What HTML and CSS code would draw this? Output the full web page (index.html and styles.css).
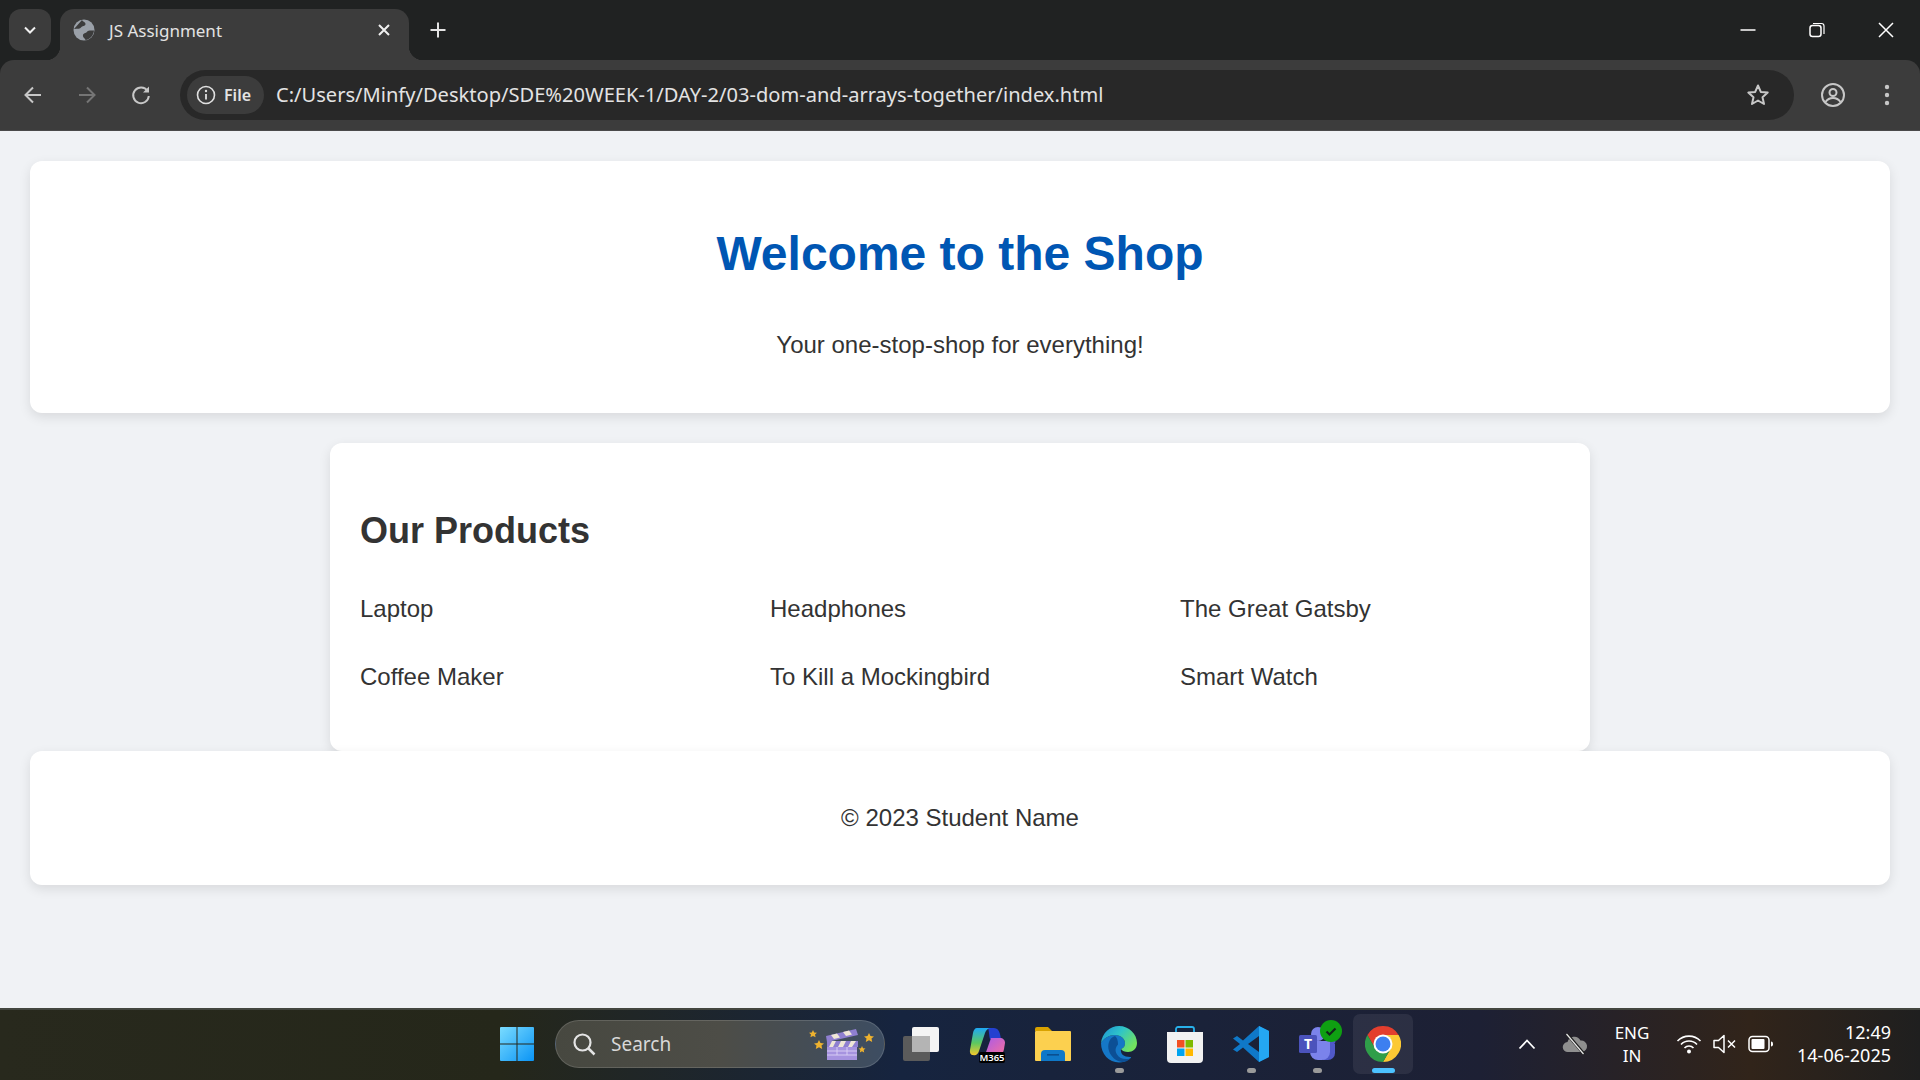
FILE: index.html
```html
<!DOCTYPE html>
<html lang="en">
<head>
	<meta charset="UTF-8" />
	<meta name="viewport" content="width=device-width, initial-scale=1.0" />
	<title>JS Assignment</title>
	<link rel="stylesheet" href="styles.css">
</head>
<body>
<div class="browser">
	<div class="titlebar">
		<button class="tab-search"><svg width="14" height="14" viewBox="0 0 14 14"><path d="M2 4.500l5 5 5-5" fill="none" stroke="#f0f0f0" stroke-width="2"/></svg></button>
		<div class="tab">
			<svg class="favicon" width="22" height="22" viewBox="0 0 22 22"><circle cx="11" cy="11" r="10.500" fill="#9aa0a8"/><path d="M9 1c.5 1.500 3.500 2 3.500 4 0 2.500-3.500 1.500-4.500 3.500-.8 1.500-3 1-7 1.500zM12.500 21c-.5-2-3-2.500-2.500-5 .4-2 2.800-1.500 3.800-3 1-1.800 3.500-1.500 7.200-1.500-.5 5-4 9-8.500 9.500z" fill="#3c3c3c"/></svg>
			<span class="tab-title">JS Assignment</span>
			<svg class="tab-close" width="14" height="14" viewBox="0 0 14 14"><path d="M2 2l10 10M12 2L2 12" stroke="#f0f0f0" stroke-width="2"/></svg>
		</div>
		<button class="new-tab"><svg width="18" height="18" viewBox="0 0 18 18"><path d="M9 1.500v15M1.500 9h15" stroke="#e4e4e4" stroke-width="2"/></svg></button>
		<div class="window-controls">
			<span class="win-btn"><svg width="18" height="18" viewBox="0 0 18 18"><path d="M1.500 9h15" stroke="#fff" stroke-width="1.500"/></svg></span>
			<span class="win-btn"><svg width="18" height="18" viewBox="0 0 18 18"><rect x="2" y="4.500" width="11" height="11" rx="2.500" fill="none" stroke="#fff" stroke-width="1.500"/><path d="M5 2.500h8.500a2.500 2.500 0 0 1 2.500 2.500v8" fill="none" stroke="#fff" stroke-width="1.200"/></svg></span>
			<span class="win-btn"><svg width="18" height="18" viewBox="0 0 18 18"><path d="M2 2l14 14M16 2L2 16" stroke="#fff" stroke-width="1.500"/></svg></span>
		</div>
	</div>

	<div class="toolbar">
		<span class="nav-btn"><svg width="22" height="22" viewBox="0 0 22 22"><path d="M19 11H4M11 3.500L3.500 11l7.500 7.500" fill="none" stroke="#c7c7c7" stroke-width="2"/></svg></span>
		<span class="nav-btn"><svg width="22" height="22" viewBox="0 0 22 22"><path d="M3 11h15M11 3.500l7.500 7.500-7.500 7.500" fill="none" stroke="#757575" stroke-width="2"/></svg></span>
		<span class="nav-btn"><svg width="22" height="22" viewBox="0 0 22 22"><path d="M17.500 7A7.800 7.800 0 1 0 18.800 12" fill="none" stroke="#c7c7c7" stroke-width="2"/><path d="M19 2.500V8.500H13z" fill="#c7c7c7"/></svg></span>
		<div class="omnibox">
			<span class="file-chip">
				<svg width="20" height="20" viewBox="0 0 20 20"><circle cx="10" cy="10" r="8.500" fill="none" stroke="#e0e0e0" stroke-width="1.600"/><path d="M10 9v5.500" stroke="#e0e0e0" stroke-width="1.800"/><circle cx="10" cy="6" r="1.200" fill="#e0e0e0"/></svg>
				File
			</span>
			<span class="url">C:/Users/Minfy/Desktop/SDE%20WEEK-1/DAY-2/03-dom-and-arrays-together/index.html</span>
			<svg class="star" width="24" height="24" viewBox="0 0 24 24"><path d="M12 2.500l2.800 6.400 6.900.7-5.200 4.600 1.500 6.800-6-3.500-6 3.500 1.500-6.800L2.300 9.600l6.900-.7z" fill="none" stroke="#c7c7c7" stroke-width="2" stroke-linejoin="round"/></svg>
		</div>
		<span class="nav-btn first-right"><svg width="26" height="26" viewBox="0 0 26 26"><circle cx="13" cy="13" r="11" fill="none" stroke="#c7c7c7" stroke-width="2"/><circle cx="13" cy="10.500" r="3.500" fill="none" stroke="#c7c7c7" stroke-width="2"/><path d="M5.500 20c2-3 4.500-4 7.500-4s5.500 1 7.500 4" fill="none" stroke="#c7c7c7" stroke-width="2"/></svg></span>
		<span class="nav-btn"><svg width="6" height="24" viewBox="0 0 6 24"><circle cx="3" cy="4" r="2.200" fill="#c7c7c7"/><circle cx="3" cy="12" r="2.200" fill="#c7c7c7"/><circle cx="3" cy="20" r="2.200" fill="#c7c7c7"/></svg></span>
	</div>
</div>

<div class="page">
	<header class="site-header card">
		<h1>Welcome to the Shop</h1>
		<p>Your one-stop-shop for everything!</p>
	</header>
	<main class="products card">
		<h2>Our Products</h2>
		<ul class="product-list">
			<li>Laptop</li>
			<li>Headphones</li>
			<li>The Great Gatsby</li>
			<li>Coffee Maker</li>
			<li>To Kill a Mockingbird</li>
			<li>Smart Watch</li>
		</ul>
	</main>
	<footer class="site-footer card">
		<p>&copy; 2023 Student Name</p>
	</footer>
</div>

<div class="taskbar">
	<div class="task-center">
		<span class="task-slot">
			<svg width="36" height="36" viewBox="0 0 36 36">
				<defs><linearGradient id="winBlue" x1="0" y1="0" x2="1" y2="1"><stop offset="0" stop-color="#7adcff"/><stop offset="1" stop-color="#0a94f5"/></linearGradient></defs>
				<path d="M1 2a1 1 0 0 1 1-1h15.500v16.500H1zM18.500 1H34a1 1 0 0 1 1 1v15.500H18.500zM1 18.500h16.500V35H2a1 1 0 0 1-1-1zM18.500 18.500H35V34a1 1 0 0 1-1 1H18.500z" fill="url(#winBlue)"/>
			</svg>
		</span>
		<div class="search-box">
			<svg width="24" height="24" viewBox="0 0 24 24"><circle cx="10.500" cy="10.500" r="8" fill="none" stroke="#e4e4e4" stroke-width="2.200"/><path d="M16.500 16.500l6 6" stroke="#e4e4e4" stroke-width="2.500"/></svg>
			<span class="search-text">Search</span>
			<svg class="search-art" width="68" height="34" viewBox="0 0 68 34">
				<path d="M19 9l30-7 2 6-31 7z" fill="#8f7fd0"/>
				<path d="M24 8l6-1.500 3 4-6 1.500zM36 5l6-1.500 3 4-6 1.500z" fill="#efe6d6"/>
				<rect x="20" y="14" width="31" height="6" fill="#efe6d6"/>
				<path d="M20 14h5l-3 6h-2zM29 14h5l-3 6h-5zM39 14h5l-3 6h-5zM49 14h2v6h-6z" fill="#8f7fd0"/>
				<rect x="20" y="20" width="30" height="13" fill="#a693e0"/>
				<path d="M20 24h30M20 28h30M30 20v8M40 20v8" stroke="#d7ccf4" stroke-width="1"/>
				<path d="M6 3l1.200 2.500 2.800.3-2 1.800.6 2.700-2.600-1.400-2.600 1.400.6-2.700-2-1.800 2.800-.3zM12 13l1.500 3 3.500.4-2.500 2.200.7 3.400-3.200-1.700-3.200 1.700.7-3.400-2.500-2.200 3.500-.4zM62 6l1.500 3 3.500.4-2.500 2.200.7 3.400-3.200-1.700-3.200 1.700.7-3.400-2.500-2.200 3.500-.4zM55 19l1 2.200 2.500.3-1.800 1.600.5 2.400-2.200-1.200-2.200 1.200.5-2.400-1.800-1.600 2.500-.3z" fill="#eeb22f"/>
			</svg>
		</div>
		<span class="task-slot first-app">
			<svg width="36" height="36" viewBox="0 0 36 36">
				<rect x="0" y="10" width="27" height="25" rx="2" fill="#5b5b5b"/>
				<rect x="9" y="1" width="27" height="25" rx="2" fill="#f4f4f4"/>
				<rect x="9" y="10" width="18" height="16" fill="#b4b4b4"/>
			</svg>
		</span>
		<span class="task-slot">
			<svg width="38" height="36" viewBox="0 0 38 36">
				<defs>
					<linearGradient id="cpLeft" x1="0" y1="0" x2="0" y2="1"><stop offset="0" stop-color="#1ea8f5"/><stop offset=".55" stop-color="#5cc860"/><stop offset="1" stop-color="#f6c92d"/></linearGradient>
					<linearGradient id="cpRight" x1="0" y1="0" x2="1" y2="1"><stop offset="0" stop-color="#a95be8"/><stop offset="1" stop-color="#f56f9e"/></linearGradient>
				</defs>
				<path d="M20 2h6c3 0 5 2 6 6l1 5H22c-1-4-1-9-2-11z" fill="#2340d0"/>
				<path d="M23 12h9c3 0 5 2 5 5l-1 6c-.5 3-2 6-6 6H17z" fill="url(#cpRight)"/>
				<path d="M9 2h14c-3 0-5 2-6 5l-6 18c-1 3-3 5-6 4-2 0-3.500-2-3-5L5 7c.5-3 2-5 4-5z" fill="url(#cpLeft)"/>
			</svg>
			<span class="m365-tag">M365</span>
		</span>
		<span class="task-slot">
			<svg width="36" height="36" viewBox="0 0 36 36">
				<path d="M0 3a2 2 0 0 1 2-2h11l4 4H0z" fill="#d9a200"/>
				<rect x="0" y="5" width="36" height="30" rx="1" fill="#fcd04f"/>
				<path d="M6 35v-7a4 4 0 0 1 4-4h16a4 4 0 0 1 4 4v7z" fill="#0f78c8"/>
				<rect x="12" y="28" width="12" height="1.600" fill="#0a4f90"/>
			</svg>
		</span>
		<span class="task-slot running">
			<svg width="36" height="37" viewBox="0 0 36 37">
				<defs><linearGradient id="edgeTop" x1="0" y1="0" x2="1" y2=".6"><stop offset="0" stop-color="#1b8fd6"/><stop offset=".5" stop-color="#2fc4c8"/><stop offset="1" stop-color="#72e35f"/></linearGradient></defs>
				<path d="M0 17c3-5 8-8 14-8 6 0 10 4 10 8 0 3-1 5-4 6-1 5 3 8 9 8 1 0 1.500.5.5 1.200C26 35 22 36.500 18 36.500 8 36.500 0 28 0 17z" fill="#1577c7"/>
				<path d="M18 0c10 0 18 8 18 17 0 6-4.500 9-9 9-3 0-6-1-7-3 3-1 4-3 4-6 0-4-4-8-10-8C8 9 3 12 0 17 1 7 9 0 18 0z" fill="url(#edgeTop)"/>
				<path d="M14 10c-6 2-8 9-6 15 2 6 7 10 13 11 3 0 6-1 8.500-3.500-6 1.500-11 0-13.500-4-2-3-2-7 1-10 0-4-1-7-3-8.500z" fill="#0c4f95"/>
			</svg>
		</span>
		<span class="task-slot">
			<svg width="36" height="38" viewBox="0 0 36 38">
				<path d="M9 9V4a2 2 0 0 1 2-2h14a2 2 0 0 1 2 2v5" fill="none" stroke="#28b0ea" stroke-width="1.800"/>
				<path d="M0 7h36v27a4 4 0 0 1-4 4H4a4 4 0 0 1-4-4z" fill="#f2f2f2"/>
				<rect x="10" y="15" width="7.500" height="7.500" fill="#f25022"/>
				<rect x="18.500" y="15" width="7.500" height="7.500" fill="#7fba00"/>
				<rect x="10" y="23.500" width="7.500" height="7.500" fill="#00a4ef"/>
				<rect x="18.500" y="23.500" width="7.500" height="7.500" fill="#ffb900"/>
			</svg>
		</span>
		<span class="task-slot running">
			<svg width="36" height="36" viewBox="0 0 36 36">
				<path d="M26 0l10 5v26l-10 5-16-14.500-6 4.500-4-2.500L7 18 0 12.500 4 10l6 4.500zM26 10l-11 8 11 8z" fill="#0f78c8" fill-rule="evenodd"/>
				<path d="M26 0l10 5v26l-10 5z" fill="#24a7f2"/>
			</svg>
		</span>
		<span class="task-slot running">
			<svg width="38" height="42" viewBox="0 0 38 42">
				<circle cx="20" cy="11" r="7" fill="#7b83eb"/>
				<circle cx="33" cy="18" r="4.500" fill="#5059c9"/>
				<path d="M25 21h12v9a7 7 0 0 1-7 7h-5z" fill="#5059c9"/>
				<path d="M12 18h20v11a8 8 0 0 1-8 8h-4a8 8 0 0 1-8-8z" fill="#7b83eb"/>
				<rect x="1" y="12" width="18" height="18" rx="1.500" fill="#4b53bc"/>
			</svg>
			<span class="teams-t">T</span>
			<svg class="teams-badge" width="22" height="22" viewBox="0 0 22 22"><circle cx="11" cy="11" r="11" fill="#0fa012"/><path d="M6.500 11.500l3 3 6-6" fill="none" stroke="#12261a" stroke-width="2.200"/></svg>
		</span>
		<span class="task-slot active">
			<svg width="36" height="36" viewBox="0 0 36 36">
				<path d="M2.410 9A18 18 0 0 1 33.590 9H18A9 9 0 0 0 10.200 22.500Z" fill="#e33e2e"/>
				<path d="M33.590 9A18 18 0 0 1 18 36L25.800 22.500A9 9 0 0 0 18 9Z" fill="#fcc934"/>
				<path d="M18 36A18 18 0 0 1 2.410 9L10.200 22.500A9 9 0 0 0 25.800 22.500Z" fill="#2f9e49"/>
				<circle cx="18" cy="18" r="9.500" fill="#fff"/>
				<circle cx="18" cy="18" r="7.500" fill="#3d7ff0"/>
			</svg>
		</span>
	</div>

	<div class="tray">
		<span class="tray-wide"><svg width="18" height="12" viewBox="0 0 18 12"><path d="M1.500 10.500L9 2.500l7.500 8" fill="none" stroke="#fff" stroke-width="1.800"/></svg></span>
		<span class="tray-wide"><svg width="26" height="22" viewBox="0 0 26 22"><path d="M6 19a5 5 0 0 1-.5-10 7 7 0 0 1 13-1.500A5.500 5.500 0 0 1 20 19z" fill="#8f8f8f"/><path d="M5 1l17 20" stroke="#1d1d1d" stroke-width="3"/><path d="M4.500 1l17 20" stroke="#e8e8e8" stroke-width="1.200"/></svg></span>
		<span class="lang"><span>ENG</span><span>IN</span></span>
		<span class="tray-icon"><svg width="26" height="20" viewBox="0 0 26 20"><path d="M1.500 7a16 16 0 0 1 23 0M5 10.500a11 11 0 0 1 16 0M8.500 14a6 6 0 0 1 9 0" fill="none" stroke="#fff" stroke-width="1.600"/><circle cx="13" cy="17.500" r="2" fill="#fff"/></svg></span>
		<span class="tray-icon"><svg width="24" height="20" viewBox="0 0 24 20"><path d="M1 6.500h4.500L11 1.500v17l-5.500-5H1z" fill="none" stroke="#fff" stroke-width="1.500" stroke-linejoin="round"/><path d="M15 6.500l7 7M22 6.500l-7 7" stroke="#fff" stroke-width="1.500"/></svg></span>
		<span class="tray-icon"><svg width="26" height="18" viewBox="0 0 26 18"><rect x="1" y="1.500" width="20" height="15" rx="3.500" fill="none" stroke="#fff" stroke-width="1.500"/><rect x="3.500" y="4" width="13" height="10" rx="1" fill="#fff"/><path d="M23 6.500a2 2 0 0 1 2 2v1a2 2 0 0 1-2 2z" fill="#fff"/></svg></span>
		<span class="clock"><span>12:49</span><span>14-06-2025</span></span>
	</div>
</div>
</body>
</html>
```

FILE: styles.css
```css
* {
	box-sizing: border-box;
}
html, body {
	height: 100%;
}
body {
	margin: 0;
	height: 1080px;
	overflow: hidden;
	display: flex;
	flex-direction: column;
	font-family: "Liberation Sans", Arial, sans-serif;
	background: #f0f2f5;
	color: #333;
}
button {
	border: 0;
	padding: 0;
	background: none;
}
svg {
	display: block;
	flex: none;
}

/* browser frame */
.browser {
	background: #202222;
	font-family: "Noto Sans", "Open Sans", sans-serif;
}
.titlebar {
	height: 60px;
	display: flex;
	align-items: flex-end;
}
.tab-search {
	width: 42px;
	height: 42px;
	margin: 0 0 9px 9px;
	border-radius: 12px;
	background: #3c3c3c;
	display: flex;
	align-items: center;
	justify-content: center;
}
.tab {
	position: relative;
	width: 349px;
	height: 51px;
	margin-left: 9px;
	padding: 0 18px 9px 13px;
	border-radius: 14px 14px 0 0;
	background: #3c3c3c;
	display: flex;
	align-items: center;
	gap: 14px;
}
.tab::before, .tab::after {
	content: "";
	position: absolute;
	bottom: 0;
	width: 14px;
	height: 14px;
}
.tab::before {
	left: -14px;
	background: radial-gradient(circle at 0 0, transparent 14px, #3c3c3c 14.500px);
}
.tab::after {
	right: -14px;
	background: radial-gradient(circle at 100% 0, transparent 14px, #3c3c3c 14.500px);
}
.tab-title {
	flex: 1;
	font-size: 17px;
	color: #e3e3e3;
	white-space: nowrap;
}
.new-tab {
	width: 40px;
	height: 40px;
	margin: 0 0 10px 9px;
	display: flex;
	align-items: center;
	justify-content: center;
}
.window-controls {
	margin-left: auto;
	align-self: stretch;
	display: flex;
}
.win-btn {
	width: 69px;
	display: flex;
	align-items: center;
	justify-content: center;
}
.toolbar {
	height: 71px;
	padding: 0 6px 1px;
	background: #3c3c3c;
	border-radius: 14px 14px 0 0;
	border-bottom: 1px solid #4a4a4a;
	display: flex;
	align-items: center;
}
.nav-btn {
	width: 54px;
	height: 50px;
	display: flex;
	align-items: center;
	justify-content: center;
}
.first-right {
	margin-left: 12px;
}
.omnibox {
	flex: 1;
	height: 50px;
	margin-left: 12px;
	padding: 0 24px 0 7px;
	border-radius: 25px;
	background: #282828;
	display: flex;
	align-items: center;
}
.file-chip {
	height: 38px;
	width: 77px;
	padding-left: 9px;
	border-radius: 19px;
	background: #3c3c3c;
	color: #e3e3e3;
	font-size: 16px;
	font-weight: 600;
	display: flex;
	align-items: center;
	gap: 8px;
}
.url {
	flex: 1;
	margin-left: 12px;
	font-size: 20.090px;
	color: #e3e3e3;
	white-space: nowrap;
}

/* shop page */
.page {
	flex: 1;
	padding: 30px 30px 0;
}
.card {
	background: #fff;
	border-radius: 12px;
	box-shadow: 0 4px 12px rgba(0, 0, 0, 0.1);
}
.site-header {
	height: 252px;
	padding: 30px;
	margin-bottom: 30px;
	text-align: center;
}
.site-header h1 {
	margin: 39px 0 0;
	font-size: 48px;
	line-height: 48px;
	color: #0056b3;
}
.site-header p {
	margin: 48px 0 0;
	font-size: 24px;
	line-height: 38px;
}
.products {
	width: 1260px;
	height: 308px;
	margin: 0 auto;
	padding: 30px;
}
.products h2 {
	margin: 37px 0 0;
	font-size: 36px;
	line-height: 42px;
}
.product-list {
	list-style: none;
	margin: 38px 0 0;
	padding: 0;
	display: grid;
	grid-template-columns: repeat(3, 1fr);
	gap: 30px;
	font-size: 24px;
	line-height: 38px;
}
.site-footer {
	height: 134px;
	position: relative;
	display: flex;
	align-items: center;
	justify-content: center;
	font-size: 24px;
}
.site-footer p {
	margin: 0;
}

/* windows taskbar */
.taskbar {
	height: 72px;
	padding-bottom: 2px;
	border-top: 2px solid #44463f;
	background: linear-gradient(90deg, #28291d 0, #25271a 500px, #16243f 900px, #1a2239 1200px, #1d2034 1480px, #31241a 1750px, #1f1f1f 1920px);
	display: flex;
	align-items: center;
	font-family: "Noto Sans", "Open Sans", sans-serif;
	color: #fff;
}
.task-center {
	padding-left: 484px;
	display: flex;
	align-items: center;
}
.task-slot {
	position: relative;
	width: 66px;
	height: 60px;
	display: flex;
	align-items: center;
	justify-content: center;
}
.first-app {
	margin-left: 3px;
}
.running::after, .active::after {
	content: "";
	position: absolute;
	left: 50%;
	bottom: 1px;
	width: 9px;
	height: 5px;
	margin-left: -4.500px;
	border-radius: 3px;
	background: #9a9a9a;
}
.active {
	border-radius: 7px;
	background: rgba(255, 255, 255, 0.07);
	width: 60px;
	margin-left: 3px;
}
.active::after {
	width: 23px;
	margin-left: -11.500px;
	background: #4cc2ff;
}
.search-box {
	width: 330px;
	height: 48px;
	margin-left: 5px;
	padding: 0 9px 0 16px;
	border-radius: 24px;
	border: 1px solid rgba(255, 255, 255, 0.14);
	background: linear-gradient(90deg, #474840, #4d4d47 50%, #3d4d62);
	display: flex;
	align-items: center;
}
.search-text {
	flex: 1;
	margin-left: 15px;
	font-size: 19px;
	color: #d8d8d8;
}
.m365-tag {
	position: absolute;
	left: 25px;
	top: 38px;
	width: 26px;
	text-align: center;
	border-radius: 2px;
	background: #000;
	font-size: 9.500px;
	line-height: 11px;
	font-weight: 600;
	color: #fff;
}
.teams-t {
	position: absolute;
	left: 15px;
	top: 21px;
	width: 18px;
	text-align: center;
	font-size: 14px;
	line-height: 18px;
	font-weight: 700;
	color: #fff;
}
.teams-badge {
	position: absolute;
	right: 8px;
	top: 6px;
}
.tray {
	margin-left: auto;
	padding-right: 29px;
	display: flex;
	align-items: center;
}
.tray-wide {
	width: 48px;
	display: flex;
	justify-content: center;
}
.tray-icon {
	width: 36px;
	display: flex;
	justify-content: center;
}
.lang {
	width: 48px;
	margin: 0 15px 0 9px;
	display: flex;
	flex-direction: column;
	align-items: center;
	font-size: 17px;
	line-height: 23px;
}
.clock {
	width: 92px;
	margin-left: 20px;
	display: flex;
	flex-direction: column;
	align-items: flex-end;
	font-size: 18px;
	line-height: 23px;
	white-space: nowrap;
}
```
